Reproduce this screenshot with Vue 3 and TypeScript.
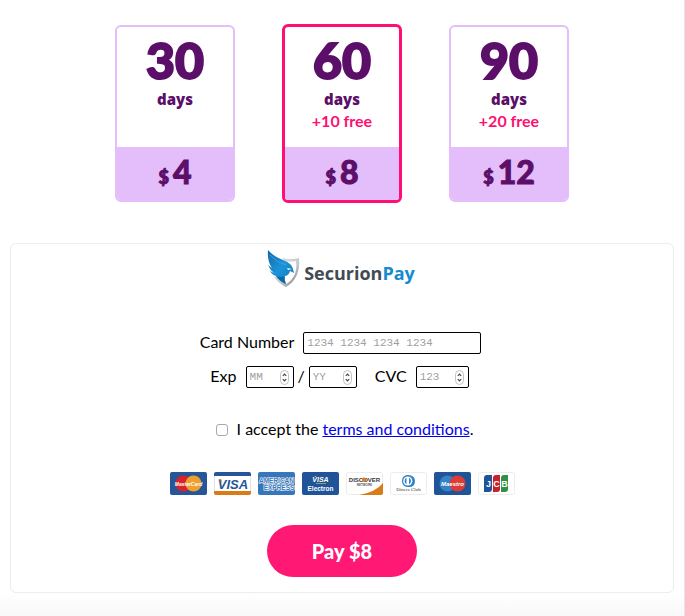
<script setup lang="ts">
import { computed, ref } from 'vue'

interface Plan {
  days: number
  bonus: number
  price: number
}

const plans: Plan[] = [
  { days: 30, bonus: 0, price: 4 },
  { days: 60, bonus: 10, price: 8 },
  { days: 90, bonus: 20, price: 12 },
]

const selectedDays = ref(60)
const cardNumber = ref('')
const month = ref<number | ''>('')
const year = ref<number | ''>('')
const cvc = ref<number | ''>('')
const accepted = ref(false)

const total = computed(() => plans.find((p) => p.days === selectedDays.value)?.price ?? 0)
</script>

<template>
  <main class="page">
    <section class="plans" aria-label="Plans">
      <button
        v-for="plan in plans"
        :key="plan.days"
        type="button"
        class="plan"
        :class="{ selected: plan.days === selectedDays }"
        :aria-pressed="plan.days === selectedDays"
        @click="selectedDays = plan.days"
      >
        <span class="plan-top">
          <span class="plan-count">{{ plan.days }}</span>
          <span class="plan-unit">days</span>
          <span v-if="plan.bonus" class="plan-bonus">+{{ plan.bonus }} free</span>
        </span>
        <span class="plan-price"><span class="currency">$</span>{{ plan.price }}</span>
      </button>
    </section>

    <form class="payment" @submit.prevent>
      <div class="brand">
        <svg class="brand-mark" width="34" height="38" viewBox="0 0 34 38" aria-hidden="true">
          <defs>
            <linearGradient id="wing" x1="0" y1="0" x2="1" y2="1">
              <stop offset="0" stop-color="#1268a8" />
              <stop offset="0.5" stop-color="#1c93d8" />
              <stop offset="1" stop-color="#0d78bd" />
            </linearGradient>
            <linearGradient id="shield" x1="0" y1="0" x2="1" y2="1">
              <stop offset="0" stop-color="#e3e5e7" />
              <stop offset="0.6" stop-color="#c4c7ca" />
              <stop offset="1" stop-color="#646a70" />
            </linearGradient>
          </defs>
          <path d="M15 8Q24 10 32 8Q34 28 19 37Q12 34 7 27L10 27Q14 32 19 34Q31 27 29 11Q23 12 17 11Z" fill="url(#shield)" />
          <path d="M1 0Q7 7 16 10Q26 13 27 23L23 21Q22 26 17 26Q16 29 19 34Q12 31 9 26Q5 25 3 21L7 23Q3 20 1 15L5 18Q0 11 1 0Z" fill="url(#wing)" />
          <path d="M3 5Q10 13 19 15" fill="none" stroke="#38a4e2" stroke-width="1" />
          <path d="M20 18L25 19L21 20Z" fill="#fff" />
          <path d="M9 26Q14 32 19 34Q17 30 18 26Q14 28 9 26Z" fill="#0a68a9" />
        </svg>
        <span class="brand-name">Securion<span class="brand-accent">Pay</span></span>
      </div>

      <div class="row">
        <label for="card-number">Card Number</label>
        <input id="card-number" v-model="cardNumber" class="box box-card" type="text" inputmode="numeric" placeholder="1234 1234 1234 1234" />
      </div>

      <div class="row row-exp">
        <label for="exp-month">Exp</label>
        <span class="box number">
          <input id="exp-month" v-model="month" type="number" min="1" max="12" placeholder="MM" />
          <svg class="stepper" width="9" height="15" viewBox="0 0 9 15" aria-hidden="true">
            <rect x=".5" y=".5" width="8" height="14" rx="4" />
            <path d="M2.800 5.800L4.500 4L6.200 5.800M2.800 9.200L4.500 11L6.200 9.200" />
          </svg>
        </span>
        <span class="slash">/</span>
        <span class="box number">
          <input id="exp-year" v-model="year" type="number" min="0" max="99" placeholder="YY" aria-label="Expiry year" />
          <svg class="stepper" width="9" height="15" viewBox="0 0 9 15" aria-hidden="true">
            <rect x=".5" y=".5" width="8" height="14" rx="4" />
            <path d="M2.800 5.800L4.500 4L6.200 5.800M2.800 9.200L4.500 11L6.200 9.200" />
          </svg>
        </span>
        <label class="cvc-label" for="cvc">CVC</label>
        <span class="box number number-cvc">
          <input id="cvc" v-model="cvc" type="number" min="0" max="999" placeholder="123" />
          <svg class="stepper" width="9" height="15" viewBox="0 0 9 15" aria-hidden="true">
            <rect x=".5" y=".5" width="8" height="14" rx="4" />
            <path d="M2.800 5.800L4.500 4L6.200 5.800M2.800 9.200L4.500 11L6.200 9.200" />
          </svg>
        </span>
      </div>

      <div class="terms">
        <input id="accept" v-model="accepted" type="checkbox" />
        <span><label for="accept">I accept the </label><a href="#terms">terms and conditions</a>.</span>
      </div>

      <div class="cards">
        <svg viewBox="0 0 37 23" role="img" aria-label="MasterCard">
          <rect width="37" height="23" rx="2" fill="#265697" />
          <circle cx="13.500" cy="11.500" r="8" fill="#d9222a" />
          <circle cx="23.500" cy="11.500" r="8" fill="#ee9f2d" />
          <text x="18.500" y="13.500" class="t-italic" font-size="5" fill="#fff">MasterCard</text>
        </svg>
        <svg viewBox="0 0 37 23" role="img" aria-label="Visa">
          <rect x=".5" y=".5" width="36" height="22" rx="2" fill="#fff" stroke="#dde3ea" />
          <path d="M0 4V2Q0 0 2 0H35Q37 0 37 2V4Z" fill="#265697" />
          <path d="M0 19H37V21Q37 23 35 23H2Q0 23 0 21Z" fill="#d97b16" />
          <text x="19" y="16.500" class="t-italic" font-size="13" fill="#265697">VISA</text>
          <path d="M4 7H7L8.500 11Q7 8 4 7Z" fill="#d97b16" />
        </svg>
        <svg viewBox="0 0 37 23" role="img" aria-label="American Express">
          <rect width="37" height="23" rx="2" fill="#3776b8" />
          <text x="18.500" y="10.500" class="t-bold" font-size="6.500" fill="#3776b8" stroke="#fff" stroke-width="1.200" paint-order="stroke">AMERICAN</text>
          <text x="21" y="17.500" class="t-bold" font-size="6.500" fill="#3776b8" stroke="#fff" stroke-width="1.200" paint-order="stroke">EXPRESS</text>
        </svg>
        <svg viewBox="0 0 37 23" role="img" aria-label="Visa Electron">
          <rect width="37" height="23" rx="2" fill="#205498" />
          <text x="18.500" y="9.500" class="t-italic" font-size="7" fill="#fff">VISA</text>
          <path d="M12 4H14L15 6Z" fill="#efb22e" />
          <path d="M14 11.500H24" stroke="#9e9b68" />
          <text x="18.500" y="18.500" class="t-bold" font-size="6.500" fill="#fff">Electron</text>
        </svg>
        <svg viewBox="0 0 37 23" role="img" aria-label="Discover">
          <rect x=".5" y=".5" width="36" height="22" rx="2" fill="#fff" stroke="#ececec" />
          <path d="M13 23Q30 20 37 11V21Q37 23 35 23Z" fill="#d97b16" />
          <text x="18.500" y="10" class="t-bold" font-size="6" fill="#34383c">DISCOVER</text>
          <circle cx="18.200" cy="7.800" r="2.300" fill="#e57818" />
          <text x="18.500" y="13.500" class="t-bold" font-size="3" fill="#555">NETWORK</text>
        </svg>
        <svg viewBox="0 0 37 23" role="img" aria-label="Diners Club">
          <rect x=".5" y=".5" width="36" height="22" rx="2" fill="#fff" stroke="#ececec" />
          <path d="M17 3H19Q25 4 25 9Q25 15 19 15H17Q12 14 12 9Q12 4 17 3Z" fill="#3483c5" />
          <circle cx="17.800" cy="9" r="4.600" fill="#fff" />
          <path d="M16.500 5.500Q12.500 9 16.500 12.500ZM19 5.500Q23 9 19 12.500Z" fill="#3483c5" />
          <text x="18.500" y="19" class="t-serif" font-size="5" fill="#30363c">Diners Club</text>
        </svg>
        <svg viewBox="0 0 37 23" role="img" aria-label="Maestro">
          <rect width="37" height="23" rx="2" fill="#205498" />
          <circle cx="13.500" cy="11.500" r="8" fill="#3283c5" />
          <circle cx="23.500" cy="11.500" r="8" fill="#dc3c36" />
          <text x="18.500" y="13.500" class="t-italic" font-size="6" fill="#fff">Maestro</text>
        </svg>
        <svg viewBox="0 0 37 23" role="img" aria-label="JCB">
          <rect x=".5" y=".5" width="36" height="22" rx="2" fill="#fff" stroke="#ececec" />
          <path d="M9 3H14V17Q14 20 11 20H6V6Q6 3 9 3Z" fill="#205498" />
          <path d="M18 3H22V17Q22 20 19 20H15V6Q15 3 18 3Z" fill="#c8202c" />
          <path d="M26 3H30V17Q30 20 27 20H23V6Q23 3 26 3Z" fill="#2d9146" />
          <text x="10.500" y="14.500" class="t-bold" font-size="9" fill="#fff">J</text>
          <text x="18.500" y="14.500" class="t-bold" font-size="9" fill="#fff">C</text>
          <text x="26.500" y="14.500" class="t-bold" font-size="9" fill="#fff">B</text>
        </svg>
      </div>

      <button class="pay" type="submit">Pay ${{ total }}</button>
    </form>
  </main>
</template>

<style>
body {
  background: #fff;
}
</style>

<style scoped>
.page {
  box-sizing: border-box;
  min-height: 100vh;
  padding: 24px 10px;
  border-right: 1px solid #e6e6e6;
  background: linear-gradient(to top, #f8f8f8, #fff 24px);
  color: #000;
  font-family: Lato, "Open Sans", sans-serif;
  font-size: 16px;
  line-height: 22px;
}

.plans {
  display: flex;
  justify-content: center;
  align-items: center;
  gap: 47px;
  margin-bottom: 40px;
}

.plan {
  display: flex;
  flex-direction: column;
  box-sizing: border-box;
  width: 120px;
  padding: 0;
  border: 2px solid #e4bdfb;
  border-radius: 6px;
  overflow: hidden;
  background: #fff;
  color: #5c0f69;
  font: inherit;
  font-weight: 900;
  cursor: pointer;
}

.plan.selected {
  border: 3px solid #ff0f72;
}

.plan-top {
  display: flex;
  flex-direction: column;
  align-items: center;
  box-sizing: border-box;
  width: 100%;
  height: 120px;
  padding-top: 5px;
}

.plan-count {
  font-size: 50px;
  line-height: 56px;
  -webkit-text-stroke: 2px currentColor;
}

.plan-unit {
  font-family: "Open Sans", sans-serif;
  font-size: 15px;
  font-weight: 800;
}

.plan-bonus {
  color: #ff0f72;
  font-size: 16px;
  font-weight: 700;
}

.plan-price {
  display: flex;
  justify-content: center;
  align-items: baseline;
  gap: 4px;
  box-sizing: border-box;
  width: 100%;
  height: 53px;
  padding-top: 5px;
  background: #e4bdfb;
  font-size: 32px;
  line-height: 40px;
  -webkit-text-stroke: 1px currentColor;
}

.currency {
  font-size: 18px;
}

.payment {
  display: flex;
  flex-direction: column;
  align-items: center;
  padding: 6px 0 15px;
  border: 1px solid #ededed;
  border-radius: 6px;
  background: #fff;
}

.brand {
  display: flex;
  align-items: center;
  gap: 3px;
  margin-bottom: 44px;
  padding-right: 2px;
}

.brand-name {
  padding-top: 8px;
  color: #414b54;
  font-family: "Open Sans", sans-serif;
  font-size: 18px;
  font-weight: 700;
}

.brand-accent {
  color: #168bce;
}

.row {
  display: flex;
  align-items: center;
  gap: 9px;
  height: 22px;
  margin-bottom: 12px;
  padding-right: 3px;
}

.row label {
  padding-bottom: 3px;
}

.row-exp {
  margin-bottom: 30px;
  padding-right: 5px;
}

.slash {
  margin: 0 -5px;
  padding-bottom: 3px;
}

.cvc-label {
  padding-left: 9px;
}

.box {
  box-sizing: border-box;
  height: 22px;
  border: 1px solid #000;
  border-radius: 2px;
  background: #fff;
}

.box-card {
  width: 178px;
  padding: 0 3px;
}

.number {
  display: flex;
  align-items: center;
  width: 48px;
  padding: 0 4px 0 3px;
}

.number-cvc {
  width: 53px;
}

.box-card,
.number input {
  color: #000;
  font-family: "Liberation Mono", monospace;
  font-size: 11px;
}

.number input {
  flex: 1;
  min-width: 0;
  padding: 0;
  border: 0;
  background: transparent;
  appearance: textfield;
}

.number input::-webkit-inner-spin-button {
  appearance: none;
  margin: 0;
}

.box-card::placeholder,
.number input::placeholder {
  color: #a0a0a0;
}

.stepper {
  flex: none;
}

.stepper rect {
  fill: #fff;
  stroke: #c4c4c4;
}

.stepper path {
  fill: none;
  stroke: #444;
  stroke-width: 1.2;
}

.terms {
  display: flex;
  align-items: center;
  gap: 9px;
  margin-bottom: 32px;
  padding-left: 5px;
}

.terms input {
  appearance: none;
  box-sizing: border-box;
  width: 12px;
  height: 12px;
  margin: 2px 0 0;
  border: 1px solid #a8a8a8;
  border-radius: 3px;
  background: #fff;
}

.terms input:checked {
  background: #0a66e8;
}

.terms label {
  white-space: pre;
}

.terms a {
  color: #0000ee;
}

.cards {
  display: flex;
  gap: 7px;
  margin-bottom: 30px;
}

.cards svg {
  display: block;
  width: 37px;
  height: 23px;
}

.cards text {
  font-family: "Liberation Sans", sans-serif;
  text-anchor: middle;
}

.cards .t-bold {
  font-weight: 700;
}

.cards .t-italic {
  font-style: italic;
  font-weight: 700;
}

.cards .t-serif {
  font-family: "Liberation Serif", serif;
}

.pay {
  width: 150px;
  height: 52px;
  border: 0;
  border-radius: 26px;
  background: #ff1975;
  color: #fff;
  font-family: inherit;
  font-size: 20px;
  font-weight: 900;
  cursor: pointer;
}
</style>
